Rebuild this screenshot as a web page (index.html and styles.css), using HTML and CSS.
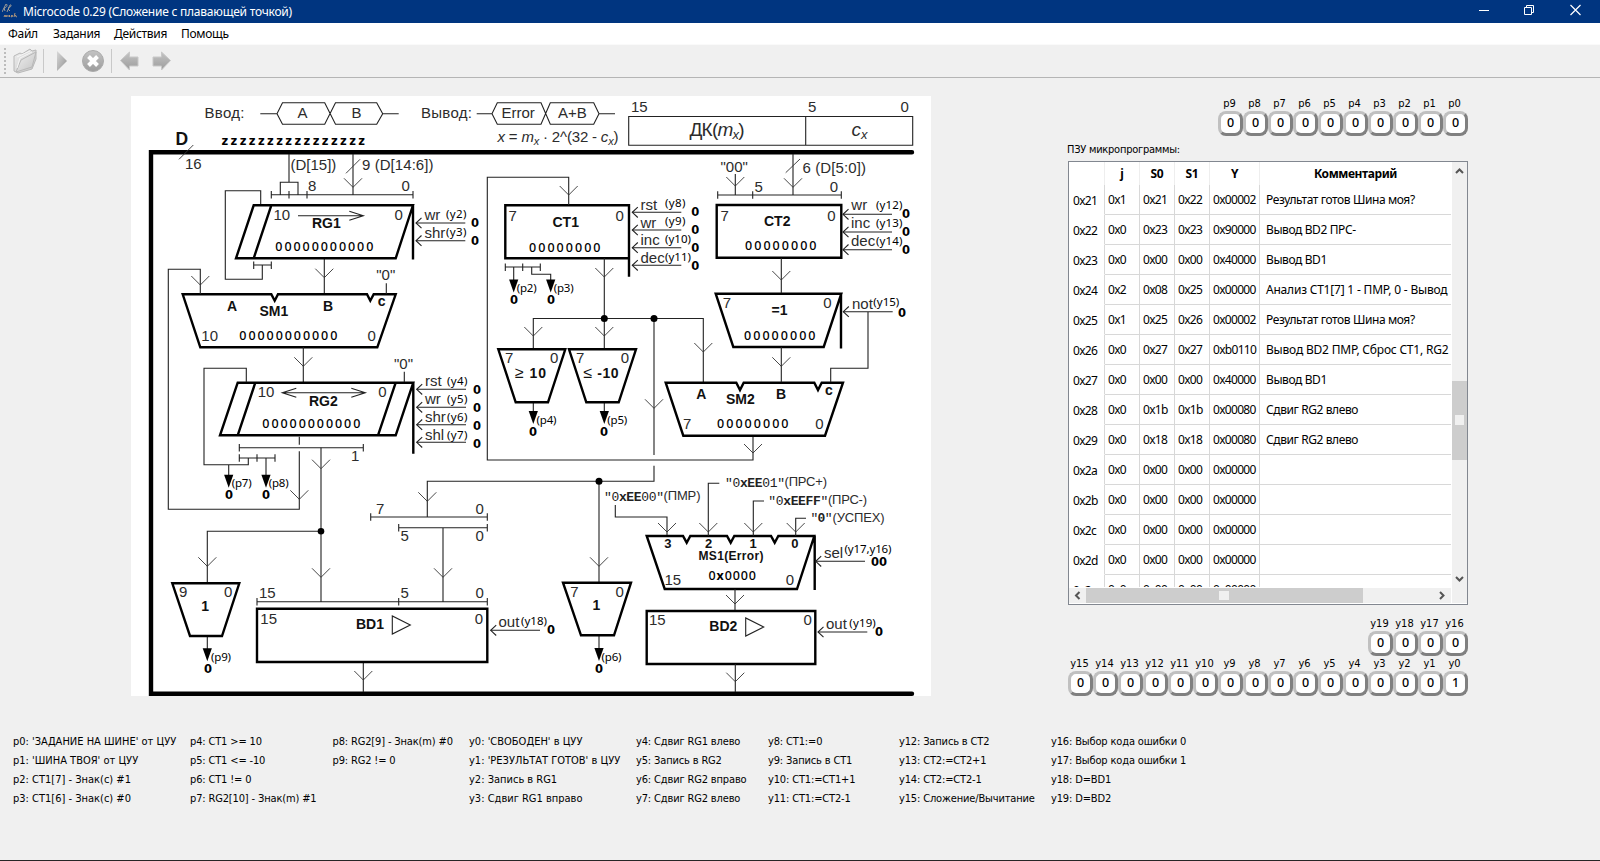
FILE: index.html
```html
<!DOCTYPE html>
<html lang="ru">
<head>
<meta charset="utf-8">
<title>Microcode 0.29</title>
<link rel="stylesheet" href="styles.css">
</head>
<body>
<header class="titlebar">
  <svg class="logo" width="16" height="16" viewBox="0 0 16 16"><g fill="none" stroke="#a9a49a" stroke-width="0.9"><path d="M0 8L4 0C6 0 5 4 2 4M2 4L3 7M5 8L8 1C10 0 9 4 6 4M6 5L8 7"/><path stroke="#c4a27c" d="M2 13l1-2 1 2 1-2M6 11v2M8 11q-2 1 0 2M10 11q-2 2 0 2 1-1 0-2M13 9l-1 4M14 11q-2 1 1 2"/></g></svg>
  <span class="caption">Microcode 0.29 (Сложение с плавающей точкой)</span>
  <svg class="winbtns" width="120" height="23" viewBox="0 0 120 23"><g fill="none" stroke="#fff"><path d="M4 10.500h10"/><path d="M51.500 7.500V5.500h7v7h-2M49.500 7.500h7v7h-7z"/><path d="M95.500 5l10 10M105.500 5l-10 10" stroke-width="1.200"/></g></svg>
</header>
<nav class="menubar"><span class="m1">Файл</span><span class="m2">Задания</span><span class="m3">Действия</span><span class="m4">Помощь</span></nav>
<div class="toolbar">
  <svg width="180" height="32" viewBox="0 0 180 32">
    <defs>
      <linearGradient id="gl" x1="0" y1="0" x2="1" y2="1"><stop offset="0" stop-color="#d8d8d8"/><stop offset="1" stop-color="#929292"/></linearGradient>
      <linearGradient id="gf" x1="0" y1="0" x2="1" y2="1"><stop offset="0" stop-color="#f0f0f0"/><stop offset="1" stop-color="#c4c4c4"/></linearGradient>
      <linearGradient id="gc" x1="0" y1="0" x2="0" y2="1"><stop offset="0" stop-color="#c4c4c4"/><stop offset="1" stop-color="#9c9c9c"/></linearGradient>
    </defs>
    <path d="M5 3v26" stroke="#bcbcbc" stroke-width="2" stroke-dasharray="2 2"/>
    <path d="M14 11l6-3 2 1 8-5 2 2 4-1 0 9-4 10-14 4-4-2z" fill="url(#gf)" stroke="#b8b8b8"/>
    <path d="M16 27l5-12 15-8-4 15z" fill="url(#gf)" stroke="#b8b8b8"/>
    <path d="M17 12l13-6M17 23l3-10 12-6" fill="none" stroke="#f6f6f6"/>
    <path d="M43.500 4v24M111.500 4v24" stroke="#c9c9c9"/>
    <path d="M57 6v20l10-10z" fill="url(#gl)"/>
    <circle cx="93" cy="16" r="10.500" fill="url(#gc)" stroke="#acacac"/>
    <path d="M88.500 11.500l9 9M97.500 11.500l-9 9" stroke="#fff" stroke-width="4"/>
    <path d="M120.500 15.500l9-8.500v5h8.500v9h-8.500v4z" fill="url(#gc)" stroke="#c8c8c8"/>
    <path d="M170.500 15.500l-9-8.500v5h-8.500v9h8.500v4z" fill="url(#gc)" stroke="#c8c8c8"/>
  </svg>
</div>
<main class="workspace">
  <svg class="diagram" width="800" height="600" viewBox="131 96 800 600">
    <defs>
      <path id="v" class="thin" d="M-9 -9L0 0L9 -9"/>
      <path id="l" class="ln" d="M5.500 -5.200L0 0L5.500 5.200"/>
      <path id="t" d="M-4.600 -13H4.600L0 0z"/>
    </defs>
    <rect x="131" y="96" width="800" height="600" fill="#fff"/>
    <path class="bus" d="M912 152.300H151V693.700H912"/>

    <!-- input and output sequence, data format -->
    <path class="ln" d="M260.300 113.700H277L282.500 102.700H324.700L335.500 124.200H376.700L382.700 113.700L376.700 102.700H335.500L324.700 124.200H282.500L277 113.700M382.700 113.700H398.700"/>
    <path class="ln" d="M476.700 113.700H492L497.300 102.700H541L550.300 124.200H593.700L599 113.700L593.700 102.700H550.300L541 124.200H497.300L492 113.700M599 113.700H615"/>
    <g class="n">
      <text x="204.500" y="117.500" textLength="40">Ввод:</text><text x="297.500" y="117.500">A</text><text x="351.500" y="117.500">B</text>
      <text x="421" y="117.500" textLength="51">Вывод:</text><text x="501.500" y="117.500">Error</text><text x="558" y="117.500">A+B</text>
      <text x="497.500" y="142.300" textLength="121"><tspan class="i">x</tspan> = <tspan class="i">m</tspan><tspan class="i sub" dy="3">x</tspan><tspan dy="-3"> · 2^(32 - </tspan><tspan class="i">c</tspan><tspan class="i sub" dy="3">x</tspan><tspan dy="-3">)</tspan></text>
      <text x="631" y="112">15</text><text x="808" y="112">5</text><text x="900.500" y="112">0</text>
    </g>
    <path class="ln" d="M628.700 116.500H912.700V145.300H628.700zM805.700 116.500V145.300"/>
    <g class="n big">
      <text x="689.500" y="136.300" textLength="55">ДК(<tspan class="i">m</tspan><tspan class="i sub2" dy="3">x</tspan><tspan dy="-3">)</tspan></text>
      <text x="851.500" y="136.300"><tspan class="i">c</tspan><tspan class="i sub2" dy="3">x</tspan></text>
    </g>
    <text class="b" style="font-size:17.500px" x="175.500" y="144.700">D</text>
    <path class="thin" d="M179 159.300L193.300 145"/>
    <text class="n" x="185" y="168.700">16</text>
    <text class="z" x="221.500" y="144.700" textLength="143.500">zzzzzzzzzzzzzzzz</text>

    <!-- RG1 -->
    <path class="ln" d="M289 154V182.300M280.300 194.700V182.300H298V194.700M271.300 194.700H413M271.300 191v7.500M289 191v7.500M307 191v7.500M413 191v7.500M353 154V194.700"/>
    <use href="#v" x="353" y="187.300"/><path class="thin" d="M346 173.300L360 159.300"/>
    <path class="ln" d="M260.700 205V190.700H225.300V279.300H262.300V265M253.700 265H271.300M253.700 261.500v7.500M271.300 261.500v7.500M298 215.700H363.300M349.300 211.200L363.300 215.700L349.300 220.200M324.300 259V294"/>
    <path class="th" d="M253.700 205.300H413L395.700 258.300H236zM271.300 205.300L253.700 258.300M413 205.300V259.500"/>
    <use href="#v" x="324.300" y="277.700"/>
    <g class="n"><text x="290.500" y="170.300">(D[15])</text><text x="362" y="170.300" textLength="71.500">9 (D[14:6])</text><text x="308" y="191.300">8</text><text x="401.500" y="191.300">0</text><text x="273.500" y="219.700">10</text><text x="394.500" y="219.700">0</text></g>
    <text class="b" x="312" y="228.300">RG1</text><text class="d" x="275.300" y="251.300" textLength="98">00000000000</text>
    <path class="ln" d="M416 223H465.300M416 240.700H465.300"/><use href="#l" x="416" y="223"/><use href="#l" x="416" y="240.700"/>
    <g class="n"><text x="424.500" y="219.700">wr</text><text x="424.500" y="237.500">shr</text></g>
    <g class="s"><text x="446" y="218" textLength="20.500">(y2)</text><text x="446" y="236" textLength="20.500">(y3)</text></g>
    <g class="z"><text x="471" y="227.300">0</text><text x="471" y="245.300">0</text></g>

    <!-- SM1 -->
    <path class="th" d="M182.700 294.300H271.300L274.700 300.700L278 294.300H367L370.300 300.700L373.700 294.300H395.700L377.300 347.300H200.300z"/>
    <path class="ln" d="M200.300 294V269.300H168.300V509.300H299.300V451.300M299.300 436.700V444.700M386.300 283.300V294M303.300 347V382"/>
    <use href="#v" x="200.300" y="285"/><use href="#v" x="299.300" y="499.300"/><use href="#v" x="303.300" y="366.300"/>
    <g class="n"><text x="376.300" y="280.300">"0"</text><text x="201.300" y="340.700">10</text><text x="367.500" y="340.700">0</text><text x="394" y="369">"0"</text></g>
    <g class="b"><text x="227" y="311.300">A</text><text x="323" y="311.300">B</text><text x="377.700" y="306.300">c</text><text x="259.500" y="316">SM1</text></g>
    <text class="d" x="239.300" y="340" textLength="98">00000000000</text>

    <!-- RG2 -->
    <path class="th" d="M237.700 382.700H413.300L395.700 435.300H220zM255.300 382.700L237.700 435.300M395.700 382.700L378 435.300M413.300 382.700V453.700"/>
    <path class="ln" d="M246.300 382V368.300H204V464.700H248.300V458M228.700 464.700V476M266 458V476M404.300 371.700V382M282.300 392.700H365.300M296.300 388.200L282.300 392.700L296.300 397.200M351.300 388.200L365.300 392.700L351.300 397.200M239.300 447.700H363.300M239.300 444v7.500M363.300 444v7.500M239.300 458H275M239.300 454.300v7.500M257 454.300v7.500M275 454.300v7.500"/>
    <use href="#t" x="228.700" y="487.700"/><use href="#t" x="266" y="487.700"/>
    <g class="n"><text x="257.700" y="397">10</text><text x="378.300" y="397">0</text><text x="351" y="460.700">1</text></g>
    <text class="b" x="309" y="405.700">RG2</text><text class="d" x="262.300" y="428" textLength="98">00000000000</text>
    <path class="ln" d="M416.700 389.300H466M416.700 407.300H466M416.700 424.700H466M416.700 442.300H466"/>
    <use href="#l" x="416.700" y="389.300"/><use href="#l" x="416.700" y="407.300"/><use href="#l" x="416.700" y="424.700"/><use href="#l" x="416.700" y="442.300"/>
    <g class="n"><text x="425" y="386.300">rst</text><text x="425" y="404">wr</text><text x="425" y="422">shr</text><text x="425" y="440">shl</text></g>
    <g class="s"><text x="447" y="384.700" textLength="20.500">(y4)</text><text x="447" y="402.700" textLength="20.500">(y5)</text><text x="447" y="420.700" textLength="20.500">(y6)</text><text x="447" y="438.700" textLength="20.500">(y7)</text><text x="231.700" y="486.700" textLength="20">(p7)</text><text x="268.700" y="486.700" textLength="20">(p8)</text></g>
    <g class="z"><text x="473" y="394">0</text><text x="473" y="412">0</text><text x="473" y="430">0</text><text x="473" y="448">0</text><text x="225" y="499.300">0</text><text x="262" y="499.300">0</text></g>

    <!-- BD1 and the p9 detector -->
    <path class="ln" d="M321 447.700V601.300M321 531.200H207.300V583M207.300 636V650M370.700 517H487.300M370.700 513.300v7.500M487.300 513.300v7.500M398.700 527.700H487.300M398.700 524v7.500M487.300 524v7.500M427.300 517V481.300H654V465.700M443 527.700V601.300M257 601.700H487.300M257 598v7.500M398.700 598v7.500M487.300 598v7.500M363.300 662V692M490.700 630.300H540"/>
    <circle cx="321" cy="531.200" r="3.300"/>
    <use href="#v" x="321" y="468.700"/><use href="#v" x="321" y="577.300"/><use href="#v" x="207.300" y="566.300"/><use href="#v" x="427.300" y="501.300"/><use href="#v" x="443" y="577.300"/><use href="#v" x="363.300" y="680"/><use href="#t" x="207.300" y="661.300"/><use href="#l" x="490.700" y="630.300"/>
    <path class="th" d="M172.300 583.300H239.300L222 636H190zM257 608.800H487.300V662H257z"/><path class="ln" d="M392.300 616V634L410.300 625z"/>
    <g class="n"><text x="179" y="597">9</text><text x="224" y="597">0</text><text x="376" y="513.700">7</text><text x="475.500" y="513.700">0</text><text x="400.500" y="540.700">5</text><text x="475.500" y="540.700">0</text><text x="259" y="598">15</text><text x="400.500" y="598">5</text><text x="475.500" y="598">0</text><text x="260.300" y="623.700">15</text><text x="474.700" y="623.700">0</text><text x="498.500" y="626.700">out</text></g>
    <g class="b"><text x="201.300" y="610.700">1</text><text x="356" y="629">BD1</text></g>
    <g class="s"><text x="211" y="660.700" textLength="20">(p9)</text><text x="521" y="625.300" textLength="26">(y18)</text></g>
    <g class="z"><text x="204" y="673">0</text><text x="547" y="634">0</text></g>

    <!-- CT1 -->
    <path class="th" d="M505.300 205.300H629V258.300H505.300zM629 205.300V276.700"/>
    <path class="ln" d="M568.700 205V177.300H487.300V460H753V435.700M505.300 267H540.300M505.300 263.500v7.500M522.700 263.500v7.500M540.300 263.500v7.500M513.700 267V282M531.700 267V274.300H550.700V282M604.300 258V349M533.300 349V318.500H703.300V382.700M654 318.500V455M533.300 402V413M604.300 402V413M599 481.300V583M599 635V650"/>
    <use href="#v" x="568.700" y="195"/><use href="#v" x="753" y="453"/><use href="#v" x="604.300" y="277"/><use href="#v" x="604.300" y="336"/><use href="#v" x="533.300" y="336"/><use href="#v" x="703.300" y="352"/><use href="#v" x="654" y="408.300"/><use href="#v" x="599" y="566.300"/>
    <use href="#t" x="513.700" y="292.500"/><use href="#t" x="550.700" y="292.500"/><use href="#t" x="533.300" y="424"/><use href="#t" x="604.300" y="424"/><use href="#t" x="599" y="661"/>
    <circle cx="604.300" cy="318.500" r="3.500"/><circle cx="654" cy="318.500" r="3.500"/><circle cx="599" cy="481.300" r="3.500"/>
    <path class="th" d="M498.300 349.300H565.300L548 402.300H515.700zM569 349.300H636L618.700 402.300H586.300zM563 582.700H631L614 635.300H581z"/>
    <g class="n"><text x="508.500" y="220.700">7</text><text x="615.500" y="220.700">0</text><text x="505" y="363">7</text><text x="550" y="363">0</text><text x="576" y="363">7</text><text x="620.700" y="363">0</text><text x="570.300" y="596.500">7</text><text x="615.500" y="596.500">0</text>
    <text x="640.500" y="210.300">rst</text><text x="640.500" y="227.500">wr</text><text x="640.500" y="245">inc</text><text x="640.500" y="262.500">dec</text></g>
    <g class="b"><text x="552.500" y="226.700">CT1</text><text x="515" y="377.500" textLength="31"><tspan class="op">≥</tspan> 10</text><text x="583.500" y="377.500" textLength="35"><tspan class="op">≤</tspan> -10</text><text x="592.500" y="610">1</text></g>
    <text class="d" x="529" y="251.700" textLength="71.500">00000000</text>
    <path class="ln" d="M632.300 212.300H681.300M632.300 230H681.300M632.300 247.700H681.300M632.300 265.300H681.300"/>
    <use href="#l" x="632.300" y="212.300"/><use href="#l" x="632.300" y="230"/><use href="#l" x="632.300" y="247.700"/><use href="#l" x="632.300" y="265.300"/>
    <g class="s"><text x="665" y="207" textLength="20.500">(y8)</text><text x="665" y="224.700" textLength="20.500">(y9)</text><text x="665" y="242.700" textLength="26">(y10)</text><text x="665" y="260.700" textLength="26">(y11)</text><text x="516.700" y="291.700" textLength="20">(p2)</text><text x="553.700" y="291.700" textLength="20">(p3)</text><text x="536.500" y="423.700" textLength="20">(p4)</text><text x="607.300" y="423.700" textLength="20">(p5)</text><text x="601.500" y="660.700" textLength="20">(p6)</text></g>
    <g class="z"><text x="691.300" y="216">0</text><text x="691.300" y="234">0</text><text x="691.300" y="252">0</text><text x="691.300" y="270">0</text><text x="510" y="303.700">0</text><text x="547" y="303.700">0</text><text x="529" y="436">0</text><text x="600" y="436">0</text><text x="595" y="673">0</text></g>

    <!-- CT2, inverter and SM2 -->
    <path class="th" d="M716.700 205H841.300V257.700H716.700zM715.700 293.700H841.300L823.700 347H733.300zM841 293.700V348.500M665.700 382.700H736.300L740 390L743.700 382.700H814.300L818 390L821.700 382.700H843L825 435.700H683.300z"/>
    <path class="ln" d="M717.700 195H841.300M717.700 191.200v7.500M752.700 191.200v7.500M841.300 191.200v7.500M735.300 174V195M793 154V195M781.300 258V293M843 214.300H892M843 232H892M843 249.700H892M843.300 311.700H892.700M868 311.700V368.300H830.700V382M781.300 347V382"/>
    <use href="#v" x="735.300" y="186"/><use href="#v" x="793" y="187.300"/><use href="#v" x="781.300" y="280"/><use href="#v" x="781.300" y="366.300"/><path class="thin" d="M785.700 172.700L800 159"/>
    <use href="#l" x="843" y="214.300"/><use href="#l" x="843" y="232"/><use href="#l" x="843" y="249.700"/><use href="#l" x="843.300" y="311.700"/>
    <g class="n"><text x="720.500" y="172">"00"</text><text x="802.500" y="172.700" textLength="63.500">6 (D[5:0])</text><text x="754.500" y="191.700">5</text><text x="829.700" y="191.700">0</text><text x="720.500" y="220.700">7</text><text x="827.300" y="220.700">0</text><text x="851.300" y="210.300">wr</text><text x="851" y="228.300">inc</text><text x="851" y="245.700">dec</text><text x="722.700" y="308.300">7</text><text x="823.300" y="308.300">0</text><text x="852" y="308.700">not</text><text x="683" y="428.700">7</text><text x="815.300" y="428.700">0</text></g>
    <g class="b"><text x="764" y="226.300">CT2</text><text x="771.500" y="315">=1</text><text x="696.200" y="399.300">A</text><text x="776" y="399.300">B</text><text x="825" y="395">c</text><text x="726" y="404">SM2</text></g>
    <g class="d"><text x="745" y="250" textLength="71.500">00000000</text><text x="744" y="340.300" textLength="71.500">00000000</text><text x="717" y="428" textLength="71.500">00000000</text></g>
    <g class="s"><text x="876" y="209" textLength="26.500">(y12)</text><text x="876" y="227" textLength="26.500">(y13)</text><text x="876" y="245" textLength="26.500">(y14)</text><text x="873.300" y="306.300" textLength="26">(y15)</text></g>
    <g class="z"><text x="902" y="218">0</text><text x="902" y="236">0</text><text x="902" y="254">0</text><text x="898" y="317">0</text></g>

    <!-- MS1 and BD2 -->
    <path class="th" d="M646.700 536H683L686.700 542.700L690.300 536H727L730.700 542.700L734.300 536H771L774.700 542.700L778.300 536H814.300L797 589H664.700zM814.700 536V590M646.700 611H815.300V664H646.700z"/>
    <path class="ln" d="M615.300 505V517H667V535M719.300 483.300H708.300V536M764 501H753.300V536M806 518.300H795.700V536M735 589V610M735.300 664V692M815.700 561.300H865M818 632H867.300M745.700 618V636L763.700 627z"/>
    <use href="#v" x="667" y="532"/><use href="#v" x="708.300" y="532"/><use href="#v" x="753.300" y="532"/><use href="#v" x="795.700" y="532"/><use href="#v" x="735" y="604"/><use href="#v" x="735.300" y="681.700"/><use href="#l" x="815.700" y="561.300"/><use href="#l" x="818" y="632"/>
    <g class="mono"><text x="604" y="500.700" textLength="60">"0<tspan class="bb">xEE</tspan>00"</text><text x="725" y="487" textLength="60">"0<tspan class="bb">xEE</tspan>01"</text><text x="768.300" y="504.700" textLength="60">"0<tspan class="bb">xEEFF</tspan>"</text><text x="810.500" y="522.300" textLength="22">"<tspan class="bb">0</tspan>"</text></g>
    <g class="n m"><text x="663.500" y="500" textLength="37">(ПМР)</text><text x="784.500" y="486.300" textLength="42.500">(ПРС+)</text><text x="828" y="504" textLength="39">(ПРС-)</text><text x="832.500" y="522" textLength="52">(УСПЕХ)</text></g>
    <g class="n"><text x="664.500" y="585">15</text><text x="785.700" y="585">0</text><text x="824" y="558.300">sel</text><text x="649" y="625">15</text><text x="803.500" y="625">0</text><text x="826" y="628.700">out</text></g>
    <g class="b"><g style="font-size:13px"><text x="664.300" y="548">3</text><text x="705" y="548">2</text><text x="749.500" y="548">1</text><text x="791.300" y="548">0</text></g><text style="font-size:12px" x="698.500" y="560.300" textLength="65">MS1(Error)</text><text x="709.300" y="631.300">BD2</text></g>
    <text class="d" x="708.500" y="580.300" textLength="47.500">0<tspan class="bb">x</tspan>0000</text>
    <g class="s"><text x="844.500" y="553" textLength="47">(y17,y16)</text><text x="849.300" y="626.700" textLength="26.500">(y19)</text></g>
    <g class="z"><text x="871" y="566.300" textLength="16">00</text><text x="875" y="636">0</text></g>
  </svg>

  <section class="side">
    <div class="bits"><div><b>p9</b><i>0</i></div><div><b>p8</b><i>0</i></div><div><b>p7</b><i>0</i></div><div><b>p6</b><i>0</i></div><div><b>p5</b><i>0</i></div><div><b>p4</b><i>0</i></div><div><b>p3</b><i>0</i></div><div><b>p2</b><i>0</i></div><div><b>p1</b><i>0</i></div><div><b>p0</b><i>0</i></div></div>
    <div class="romlabel">ПЗУ микропрограммы:</div>
    <div class="rom">
      <div class="view">
        <div class="row head"><span></span><span>j</span><span>S0</span><span>S1</span><span>Y</span><span>Комментарий</span></div>
        <div class="row"><span>0x21</span><span>0x1</span><span>0x21</span><span>0x22</span><span>0x00002</span><span>Результат готов Шина моя?</span></div>
        <div class="row"><span>0x22</span><span>0x0</span><span>0x23</span><span>0x23</span><span>0x90000</span><span>Вывод BD2 ПРС-</span></div>
        <div class="row"><span>0x23</span><span>0x0</span><span>0x00</span><span>0x00</span><span>0x40000</span><span>Вывод BD1</span></div>
        <div class="row"><span>0x24</span><span>0x2</span><span>0x08</span><span>0x25</span><span>0x00000</span><span class="wide">Анализ CT1[7] 1 - ПМР, 0 - Вывод</span></div>
        <div class="row"><span>0x25</span><span>0x1</span><span>0x25</span><span>0x26</span><span>0x00002</span><span>Результат готов Шина моя?</span></div>
        <div class="row"><span>0x26</span><span>0x0</span><span>0x27</span><span>0x27</span><span>0xb0110</span><span class="wide">Вывод BD2 ПМР, Сброс CT1, RG2</span></div>
        <div class="row"><span>0x27</span><span>0x0</span><span>0x00</span><span>0x00</span><span>0x40000</span><span>Вывод BD1</span></div>
        <div class="row"><span>0x28</span><span>0x0</span><span>0x1b</span><span>0x1b</span><span>0x00080</span><span>Сдвиг RG2 влево</span></div>
        <div class="row"><span>0x29</span><span>0x0</span><span>0x18</span><span>0x18</span><span>0x00080</span><span>Сдвиг RG2 влево</span></div>
        <div class="row"><span>0x2a</span><span>0x0</span><span>0x00</span><span>0x00</span><span>0x00000</span><span></span></div>
        <div class="row"><span>0x2b</span><span>0x0</span><span>0x00</span><span>0x00</span><span>0x00000</span><span></span></div>
        <div class="row"><span>0x2c</span><span>0x0</span><span>0x00</span><span>0x00</span><span>0x00000</span><span></span></div>
        <div class="row"><span>0x2d</span><span>0x0</span><span>0x00</span><span>0x00</span><span>0x00000</span><span></span></div>
        <div class="row"><span>0x2e</span><span>0x0</span><span>0x00</span><span>0x00</span><span>0x00000</span><span></span></div>
      </div>
      <svg class="vbar" width="15" height="426" viewBox="0 0 15 426"><rect width="15" height="426" fill="#f0f0f0"/><rect y="219" width="15" height="79" fill="#cdcdcd"/><rect x="3" y="253" width="9" height="10" fill="#f0f0f0"/><path d="M4 11l3.500-3.500L11 11M4 415l3.500 3.500L11 415" fill="none" stroke="#555" stroke-width="2"/></svg>
      <svg class="hbar" width="382" height="15" viewBox="0 0 382 15"><rect width="382" height="15" fill="#f0f0f0"/><rect x="17" width="277" height="15" fill="#cdcdcd"/><rect x="150" y="3" width="10" height="9" fill="#f0f0f0"/><path d="M10.500 4L7 7.500L10.500 11M371 4l3.500 3.500L371 11" fill="none" stroke="#555" stroke-width="2"/></svg>
      <div class="corner"></div>
    </div>
    <div class="bits yhi"><div><b>y19</b><i>0</i></div><div><b>y18</b><i>0</i></div><div><b>y17</b><i>0</i></div><div><b>y16</b><i>0</i></div></div>
    <div class="bits"><div><b>y15</b><i>0</i></div><div><b>y14</b><i>0</i></div><div><b>y13</b><i>0</i></div><div><b>y12</b><i>0</i></div><div><b>y11</b><i>0</i></div><div><b>y10</b><i>0</i></div><div><b>y9</b><i>0</i></div><div><b>y8</b><i>0</i></div><div><b>y7</b><i>0</i></div><div><b>y6</b><i>0</i></div><div><b>y5</b><i>0</i></div><div><b>y4</b><i>0</i></div><div><b>y3</b><i>0</i></div><div><b>y2</b><i>0</i></div><div><b>y1</b><i>0</i></div><div><b>y0</b><i>1</i></div></div>
  </section>
</main>
<footer class="legend">
  <div class="caps"><p>p0: 'ЗАДАНИЕ НА ШИНЕ' от ЦУУ</p><p>p1: 'ШИНА ТВОЯ' от ЦУУ</p><p>p2: CT1[7] - Знак(c) #1</p><p>p3: CT1[6] - Знак(c) #0</p></div>
  <div><p>p4: CT1 &gt;= 10</p><p>p5: CT1 &lt;= -10</p><p>p6: CT1 != 0</p><p>p7: RG2[10] - Знак(m) #1</p></div>
  <div><p>p8: RG2[9] - Знак(m) #0</p><p>p9: RG2 != 0</p></div>
  <div class="caps"><p>y0: 'СВОБОДЕН' в ЦУУ</p><p>y1: 'РЕЗУЛЬТАТ ГОТОВ' в ЦУУ</p><p>y2: Запись в RG1</p><p>y3: Сдвиг RG1 вправо</p></div>
  <div><p>y4: Сдвиг RG1 влево</p><p>y5: Запись в RG2</p><p>y6: Сдвиг RG2 вправо</p><p>y7: Сдвиг RG2 влево</p></div>
  <div><p>y8: CT1:=0</p><p>y9: Запись в CT1</p><p>y10: CT1:=CT1+1</p><p>y11: CT1:=CT2-1</p></div>
  <div><p>y12: Запись в CT2</p><p>y13: CT2:=CT2+1</p><p>y14: CT2:=CT2-1</p><p>y15: Сложение/Вычитание</p></div>
  <div><p>y16: Выбор кода ошибки 0</p><p>y17: Выбор кода ошибки 1</p><p>y18: D=BD1</p><p>y19: D=BD2</p></div>
</footer>
</body>
</html>
```
FILE: styles.css
```css
* { box-sizing: border-box; }
body { margin: 0; width: 1600px; height: 861px; background: #f0f0f0; color: #000; display: flex; flex-direction: column; overflow: hidden; font: 12px "Noto Sans", sans-serif; border-bottom: 1px solid #262626; }
.titlebar { height: 23px; flex: none; background: #003580; color: #fff; display: flex; align-items: center; padding: 0 5px 0 2px; }
.logo { margin-right: 5px; }
.caption { flex: 1; line-height: 23px; white-space: nowrap; letter-spacing: -0.23px; }
.menubar { height: 21px; flex: none; background: #fff; display: grid; grid-template-columns: 45px 61px 67px auto; padding-left: 8px; line-height: 21px; letter-spacing: -0.3px; }
.toolbar { height: 34px; flex: none; margin-top: 0; border-top: 1px solid #fafafa; border-bottom: 1px solid #b5b5b5; }
.toolbar svg { display: block; }
.workspace { height: 618px; flex: none; display: flex; padding: 18px 0 0 131px; }
.diagram { flex: none; display: block; }
.diagram text { white-space: pre; }
.ln { fill: none; stroke: #222; stroke-width: 1.1; }
.thin { fill: none; stroke: #333; stroke-width: 0.9; }
.th { fill: none; stroke: #000; stroke-width: 2.4; }
.bus { fill: none; stroke: #000; stroke-width: 4.4; stroke-linecap: round; }
.n { font: 15px "Liberation Sans", Arial, sans-serif; fill: #2c2c2c; }
.big { font-size: 19px; }
.m { font-size: 13px; }
.i { font-style: italic; }
.sub { font-size: 11px; }
.sub2 { font-size: 13px; }
.b { font: bold 14px "Liberation Sans", Arial, sans-serif; fill: #111; }
.op { font-weight: normal; font-size: 16px; }
.d { font: 500 12.5px "Noto Sans", sans-serif; }
.z { font: bold 11.5px "DejaVu Sans", sans-serif; }
.s { font: 11.5px "Noto Sans", sans-serif; }
.mono { font: 13px "Liberation Mono", monospace; fill: #222; }
.bb { font-weight: bold; }
.side { width: 400px; margin-left: 137px; display: flex; flex-direction: column; }
.bits { display: flex; justify-content: flex-end; }
.bits div { width: 25px; }
.bits b { display: block; font: 11px/15px "DejaVu Sans Condensed", "DejaVu Sans", sans-serif; text-align: center; padding-right: 2px; }
.bits i { display: block; width: 25px; height: 25px; border: 3px solid; border-color: #c0c0c0 #808080 #808080 #c0c0c0; border-radius: 8px; background: #fff; font: 500 12.5px/18px "Noto Sans", sans-serif; text-align: center; }
.romlabel { height: 25px; font: 11px/27px "DejaVu Sans Condensed", sans-serif; margin-left: -1px; letter-spacing: -0.25px; }
.rom { width: 400px; height: 444px; border: 1px solid #828790; background: #fff; display: grid; grid-template-columns: 382px 16px; grid-template-rows: 426px 16px; }
.view { overflow: hidden; height: 425px; }
.row { display: grid; grid-template-columns: 36px 35px 35px 35px 50px 191px; height: 30px; }
.row span { border-right: 1px solid #d8d8d8; border-bottom: 1px solid #d8d8d8; padding-left: 3px; line-height: 29px; white-space: nowrap; overflow: hidden; letter-spacing: -0.7px; }
.row span:first-child { border-bottom-color: #fff; padding-left: 4px; line-height: 31px; }
.row span:last-child { padding-left: 6px; border-right: 0; letter-spacing: -0.4px; }
.row span.wide:last-child { letter-spacing: -0.2px; }
.head { height: 23px; font-weight: bold; }
.head span, .head span:first-child { border-bottom: 0; border-right-color: #eee; line-height: 24px; text-align: center; padding: 0; letter-spacing: -0.3px; }
.head span:last-child { padding: 0; }
.vbar { margin-left: 1px; }
.corner { width: 15px; height: 15px; margin-left: 1px; background: #f0f0f0; }
.yhi { margin: 11px 0 0; }
.legend { display: grid; grid-template-columns: 177px 142.500px 136.500px 167px 132px 131px 152px auto; padding: 36px 0 0 13px; font: 11px/19px "DejaVu Sans Condensed", sans-serif; letter-spacing: -0.15px; white-space: nowrap; }
.legend .caps { letter-spacing: 0; }
.legend p { margin: 0; }
```
